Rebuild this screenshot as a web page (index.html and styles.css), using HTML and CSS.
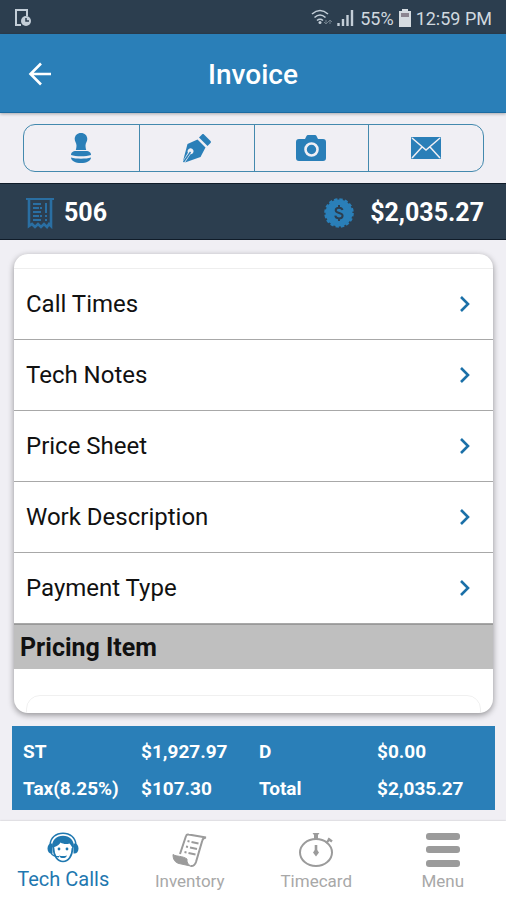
FILE: index.html
```html
<!DOCTYPE html>
<html lang="en">
<head>
    <meta charset="UTF-8">
    <meta name="viewport" content="width=device-width, initial-scale=1.0">
    <title>Invoice</title>
    <link rel="stylesheet" href="styles.css">
</head>
<body>
    <div class="status-bar">
        <svg width="18" height="20" viewBox="0 0 18 20" fill="none" stroke="#c3ced8" stroke-width="2">
            <path d="M13 8V2H2v15h5"/>
            <circle cx="12" cy="13" r="5" fill="#c3ced8" stroke="none"/>
            <path d="M12 10v3h3" stroke="#2c3e4f" stroke-width="1.5"/>
        </svg>
        <div class="status-info">
            <svg width="44" height="20" viewBox="0 0 44 20" fill="none" stroke="#c3ced8" stroke-width="1.6">
                <path d="M1 6Q9-1 17 6M3.500 9.500Q9 4.500 14.500 9.500M6 12.500Q9 10 12 12.500"/>
                <circle cx="9" cy="14.500" r="1.500" fill="#c3ced8" stroke="none"/>
                <path d="M15 12v4m-2-2 2 2 2-2M19 16v-4m-2 2 2-2 2 2" stroke="#71808d" stroke-width="1"/>
                <path d="M27.500 15v3M32 11v7M36.500 7v11M41 2v16" stroke-width="2.400"/>
            </svg>
            <span>55%</span>
            <svg width="12" height="18" viewBox="0 0 12 18" fill="#d5dbe0">
                <path d="M3 0h6v2h3v16H0V2h3z"/>
                <path d="M2 4h8v4H2z" fill="#8b8590"/>
            </svg>
            <span>12:59 PM</span>
        </div>
    </div>

    <header>
        <button class="back-button" aria-label="Back">
            <svg width="24" height="24" viewBox="0 0 24 24" fill="none" stroke="#fff" stroke-width="2.600">
                <path d="M23 12H3M13 1.500 2.500 12 13 22.500"/>
            </svg>
        </button>
        <h1>Invoice</h1>
    </header>

    <div class="toolbar">
        <button aria-label="Stamp">
            <svg width="22" height="32" viewBox="0 0 22 32" fill="#2a7fb8">
                <path d="M11 1c-3.800 0-6.300 2.600-6.300 6 0 2.500 1.800 4 1.800 6.500 0 2-.5 3.500-.7 4.500h10.400c-.2-1-.7-2.500-.7-4.500 0-2.500 1.800-4 1.800-6.500 0-3.400-2.500-6-6.300-6z"/>
                <path d="M1 23c0-3 2.500-4 4.500-4h11c2 0 4.500 1 4.500 4-5 1.800-15 1.800-20 0z"/>
                <path d="M1 25.500c5 1.600 15 1.600 20 0 0 3.500-4.500 5.500-10 5.500S1 29 1 25.500z"/>
            </svg>
        </button>
        <button aria-label="Sign">
            <svg width="30" height="30" viewBox="0 0 30 30" fill="#2a7fb8">
                <path d="M20 1.500c.6-.6 1.400-.6 2 0l6.500 6.500c.6.6.6 1.400 0 2L25.500 13 17 4.500z"/>
                <path d="M15.500 6.500l8 8L18.500 24 3 29.500l5.500-8.200a3 3 0 1 0-2.600-1.600L1 28 5.500 11z"/>
                <path d="M1.500 29 8.500 19" fill="none" stroke="#2a7fb8" stroke-width="1.400"/>
            </svg>
        </button>
        <button aria-label="Take photo">
            <svg width="30" height="26" viewBox="0 0 30 26" fill="#2a7fb8">
                <path d="M3 4h6l1.500-3c.3-.6.800-1 1.500-1h7c.7 0 1.200.4 1.500 1L22 4h5a3 3 0 0 1 3 3v16a3 3 0 0 1-3 3H3a3 3 0 0 1-3-3V7a3 3 0 0 1 3-3z"/>
                <circle cx="15.500" cy="14.500" r="6" fill="none" stroke="#f0eff4" stroke-width="2.600"/>
            </svg>
        </button>
        <button aria-label="Email">
            <svg width="30" height="22" viewBox="0 0 30 22">
                <rect width="30" height="22" rx="1" fill="#2a7fb8"/>
                <path d="M1 1l14 12L29 1M1 21l10-11M29 21 19 10" fill="none" stroke="#f0eff4" stroke-width="1.500"/>
            </svg>
        </button>
    </div>

    <div class="invoice-bar">
        <svg width="28" height="32" viewBox="0 0 28 32" fill="none" stroke="#2a6fa3" stroke-width="2">
            <path d="M0 2h28"/>
            <path d="M3 2v27l3-2 3 3 3-3 3 3 3-3 3 3 2-3 2 2V2" stroke-width="2.600"/>
            <path d="M7 7h8M7 11h6M7 15h8M7 19h6M7 23h8M14 11h2M14 19h2M20 6v10M20 18v2M20 22v2"/>
        </svg>
        <span class="invoice-number">506</span>
        <svg class="amount-icon" width="30" height="32" viewBox="0 0 30 32">
            <circle cx="15" cy="16" r="13.500" fill="#2a7fb8"/>
            <circle cx="15" cy="16" r="13.500" fill="none" stroke="#2a7fb8" stroke-width="2.600" stroke-dasharray="3.300 2"/>
            <path d="M18.500 13c-.4-1.500-1.700-2.300-3.500-2.300-2 0-3.300 1-3.300 2.500 0 3.600 6.900 2 6.900 5.600 0 1.600-1.500 2.600-3.600 2.600s-3.500-1-3.700-2.700M15 8v3M15 21v3" fill="none" stroke="#2c3e4f" stroke-width="2"/>
        </svg>
        <span>$2,035.27</span>
    </div>

    <main>
        <section class="card">
            <ul class="sections">
                <li><a href="#">Call Times <svg width="12" height="18" viewBox="0 0 12 18"><path d="M2 2l7 7-7 7"/></svg></a></li>
                <li><a href="#">Tech Notes <svg width="12" height="18" viewBox="0 0 12 18"><path d="M2 2l7 7-7 7"/></svg></a></li>
                <li><a href="#">Price Sheet <svg width="12" height="18" viewBox="0 0 12 18"><path d="M2 2l7 7-7 7"/></svg></a></li>
                <li><a href="#">Work Description <svg width="12" height="18" viewBox="0 0 12 18"><path d="M2 2l7 7-7 7"/></svg></a></li>
                <li><a href="#">Payment Type <svg width="12" height="18" viewBox="0 0 12 18"><path d="M2 2l7 7-7 7"/></svg></a></li>
            </ul>
            <h2>Pricing Item</h2>
            <div class="pricing-item"></div>
        </section>
        <table class="totals">
            <tr>
                <th>ST</th>
                <td>$1,927.97</td>
                <th>D</th>
                <td>$0.00</td>
            </tr>
            <tr>
                <th>Tax(8.25%)</th>
                <td>$107.30</td>
                <th>Total</th>
                <td>$2,035.27</td>
            </tr>
        </table>
    </main>

    <nav class="tabs">
        <a href="#" class="active">
            <svg width="32" height="32" viewBox="0 0 32 32" fill="#1f78b0">
                <path d="M3 13C3.500 5.500 9 1.200 16 1.200S28.500 5.500 29 13" fill="none" stroke="#1f78b0" stroke-width="1.500"/>
                <path d="M5 15C5 8 9.500 3.800 16 3.800S27 8 27 15l-1.500 2c-.5-2.500-1.500-4-3-5.500-3.500 1-6.500.5-9-1-1 2-3.500 3.500-6 4.500L6.500 17z"/>
                <path d="M6.500 16c.2 8 4 13.500 9.500 13.500S25.300 24 25.500 16" fill="none" stroke="#1f78b0" stroke-width="1.700"/>
                <path d="M5.500 11.500v10C2.500 22 .5 20 .5 16.500s2-5.500 5-5zM26.500 11.500v10c3 .5 5-1.500 5-5s-2-5.500-5-5z"/>
                <circle cx="12" cy="17" r="1.400"/>
                <circle cx="20" cy="17" r="1.400"/>
                <path d="M4 21c1.500 3 4.500 3.700 8 3.800" fill="none" stroke="#1f78b0" stroke-width="1.400"/>
                <path d="M12 23.500c2.500.8 5.500.8 8 0-.8 3.400-7.200 3.400-8 0z"/>
            </svg>
            <span>Tech Calls</span>
        </a>
        <a href="#">
            <svg width="36" height="36" viewBox="0 0 36 36" fill="none" stroke="#9b9b9b" stroke-width="2">
                <path d="M8 22 14 4q.6-2 2.600-1.500L34 5.500q-3 .3-3.700 3L24 30q-1.500 4.500-5.500 4"/>
                <path d="M1 22.500c4 2.500 9 1 14 4.500-.5 3 1 5.500 3.500 7L7 31.500c-4-1-6-4-6-9z" fill="#9b9b9b" stroke-width="1"/>
                <path d="M15.500 9l2 .4M19.500 10l7 1.400M14 14.500l2 .4M18 15.500l7 1.400M12.500 20l2 .4M16.500 21l7 1.400"/>
            </svg>
            <span>Inventory</span>
        </a>
        <a href="#">
            <svg width="36" height="36" viewBox="0 0 36 36" fill="none" stroke="#9b9b9b" stroke-width="2">
                <ellipse cx="18" cy="20.500" rx="16" ry="13.500"/>
                <path d="M14.500 1h7L20 3v4h-4V3z" fill="#9b9b9b" stroke="none"/>
                <path d="M28 11l4-4M30 6.500l4 3" stroke-width="2.400"/>
                <path d="M18 13v7" stroke-width="2.600"/>
                <path d="M18 16.500l3 4-3 4-3-4z" fill="#9b9b9b" stroke="none"/>
            </svg>
            <span>Timecard</span>
        </a>
        <a href="#">
            <svg width="36" height="36" viewBox="0 0 36 36" fill="#9b9b9b">
                <rect x="1" y="1" width="34" height="7" rx="3"/>
                <rect x="1" y="14" width="34" height="7" rx="3"/>
                <rect x="1" y="28" width="34" height="7" rx="3"/>
            </svg>
            <span>Menu</span>
        </a>
    </nav>
</body>
</html>
```
FILE: styles.css
```css
* {
    box-sizing: border-box;
}

body {
    font-family: Roboto, Arial, sans-serif;
    margin: 0;
    height: 100vh;
    display: flex;
    flex-direction: column;
    background-color: #f0eff4;
    color: #111;
}

svg {
    display: block;
    flex-shrink: 0;
}

a {
    color: inherit;
    text-decoration: none;
}

button {
    border: none;
    background: none;
    padding: 0;
    cursor: pointer;
}

.status-bar {
    display: flex;
    justify-content: space-between;
    align-items: center;
    height: 34px;
    padding: 2px 14px 0;
    background-color: #2c3e4f;
    color: #d0d8df;
    font-size: 18px;
}

.status-info {
    display: flex;
    align-items: center;
    gap: 5px;
}

header {
    display: grid;
    grid-template-columns: 24px 1fr 24px;
    align-items: center;
    height: 79px;
    padding: 2px 28px 0;
    background-color: #2a7fb8;
    border-bottom: 1px solid #1b6ba2;
    box-shadow: 0 1px 3px rgba(0, 0, 0, 0.3);
    color: #fff;
}

header h1 {
    margin: 0;
    font-size: 28px;
    font-weight: 500;
    text-align: center;
}

.toolbar {
    display: grid;
    grid-template-columns: repeat(4, 1fr);
    height: 48px;
    margin: 11px 22px 11px 23px;
    border: 1px solid #4389ae;
    border-radius: 12px;
}

.toolbar button {
    display: flex;
    align-items: center;
    justify-content: center;
}

.toolbar button + button {
    border-left: 1px solid #4389ae;
}

.invoice-bar {
    display: flex;
    align-items: center;
    height: 57px;
    padding: 2px 22px 0 26px;
    background-color: #2c3e4f;
    border-top: 1px solid #101c29;
    border-bottom: 1px solid #101c29;
    color: #fff;
    font-size: 25px;
    font-weight: bold;
}

.invoice-number {
    margin-left: 10px;
}

.amount-icon {
    margin-left: auto;
    margin-right: 16px;
}

main {
    flex: 1;
    min-height: 0;
    display: flex;
    flex-direction: column;
    padding: 14px 11px 11px 12px;
}

.card {
    flex: 1;
    min-height: 0;
    overflow: hidden;
    margin: 0 2px;
    padding-top: 14px;
    background-color: #fff;
    border-radius: 14px;
    box-shadow: 0 2px 6px rgba(0, 0, 0, 0.4);
}

.sections {
    list-style: none;
    margin: 0;
    padding: 0;
    border-top: 1px solid #eee;
}

.sections a {
    display: flex;
    justify-content: space-between;
    align-items: center;
    height: 71px;
    padding: 0 22px 0 12px;
    border-bottom: 1px solid #a8a8a8;
    font-size: 24px;
}

.sections path {
    fill: none;
    stroke: #1b70a8;
    stroke-width: 2.6;
}

.card h2 {
    margin: 0;
    padding: 9px 6px 7px;
    background-color: #bfbfbf;
    border-top: 1px solid #999;
    font-size: 25px;
    line-height: 28px;
}

.pricing-item {
    height: 120px;
    margin: 26px 12px 0;
    border: 1px solid #f0f0f0;
    border-radius: 14px;
}

.totals {
    width: 100%;
    margin-top: 13px;
    padding: 7px 0 3px 11px;
    border-spacing: 0;
    table-layout: fixed;
    background-color: #2a7fb8;
    color: #fff;
    font-size: 19px;
    font-weight: bold;
    text-align: left;
}

.totals th,
.totals td {
    height: 37px;
    padding: 0;
    white-space: nowrap;
}

.tabs {
    display: grid;
    grid-template-columns: repeat(4, 1fr);
    height: 79px;
    background-color: #fff;
    box-shadow: 0 0 2px rgba(0, 0, 0, 0.2);
    color: #a8a8a8;
    font-size: 17px;
}

.tabs a {
    display: flex;
    flex-direction: column;
    align-items: center;
    justify-content: space-between;
    padding: 11px 0 9px;
}

.tabs .active {
    color: #1f78b0;
    font-size: 20px;
}
```
